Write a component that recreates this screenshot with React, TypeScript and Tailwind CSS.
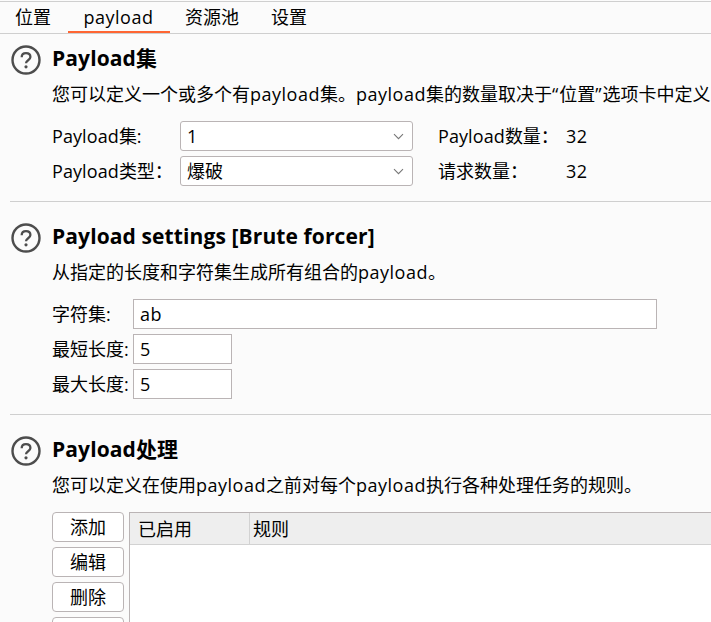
import type { ReactNode } from 'react';

/** Sets Latin runs a little wider than the Chinese text around them. */
function T({ children, tight = false }: { children: string; tight?: boolean }) {
  const runs = children.split(/([A-Za-z0-9 \[\]“”]+)/);
  return (
    <>
      {runs.map((run, i) =>
        i % 2 ? (
          <span key={i} className={/[“”]/.test(run) ? 'tracking-[1px]' : tight ? 'tracking-[0.005em]' : 'tracking-[0.028em]'}>
            {run}
          </span>
        ) : (
          run
        ),
      )}
    </>
  );
}

function Label({ text, className }: { text: string; className: string }) {
  return (
    <span className={`leading-none ${className}`}>
      <T tight>{text}</T>
    </span>
  );
}

function Tab({ label, className, active = false }: { label: string; className: string; active?: boolean }) {
  return (
    <div className={`flex h-[31px] items-center justify-center border-b-2 ${active ? 'border-[#ff6633]' : 'border-transparent'} ${className}`}>
      <span className="leading-none">
        <T>{label}</T>
      </span>
    </div>
  );
}

function HelpIcon() {
  return (
    <svg width="30" height="30" viewBox="0 0 30 30" fill="none" stroke="#4d4d4d" className="shrink-0">
      <circle cx="15" cy="15" r="13.5" strokeWidth="2.4" />
      <path d="M10.7 12.2C10.7 9.6 12.6 8.2 15 8.2s4.4 1.4 4.4 3.8c0 3.2-4.3 3.2-4.4 6.2" strokeWidth="2.3" />
      <circle cx="15" cy="21.8" r="1.6" fill="#4d4d4d" stroke="none" />
    </svg>
  );
}

function Section({ title, text, className, children }: { title: string; text: string; className: string; children: ReactNode }) {
  return (
    <section className={`ml-[10px] pl-px ${className}`}>
      <div className="flex h-[30px] items-center gap-[11px]">
        <HelpIcon />
        <h2 className="pb-[3px] text-[21px] leading-none font-bold">
          <T tight>{title}</T>
        </h2>
      </div>
      <div className="pl-[41px]">
        <p className="h-[46px] pt-[10px] leading-[18px]">
          <T>{text}</T>
        </p>
        {children}
      </div>
    </section>
  );
}

function Select({ value }: { value: string }) {
  return (
    <div className="flex h-[30px] w-[233px] items-center justify-between rounded-[3px] border border-[#bab4b5] bg-white pr-[8px] pl-[6px]">
      <span className="leading-none">
        <T>{value}</T>
      </span>
      <svg width="12" height="8" viewBox="0 0 12 8" fill="none" stroke="#777" strokeWidth="1.1">
        <path d="M2 2.2 6.5 6.7 11 2.2" />
      </svg>
    </div>
  );
}

function Field({ label, value, width }: { label: string; value: string; width: string }) {
  return (
    <div className="flex items-center">
      <Label text={label} className="w-[81px]" />
      <div className={`flex h-[30px] items-center border border-[#bab4b5] bg-white pl-[6px] leading-none ${width}`}>
        <T>{value}</T>
      </div>
    </div>
  );
}

const setRows = [
  { label: 'Payload集:', value: '1', count: 'Payload数量：' },
  { label: 'Payload类型：', value: '爆破', count: '请求数量：' },
];

export default function App() {
  return (
    <div className="h-[622px] w-[711px] overflow-hidden bg-[#fbfbfb] pt-px font-['Open_Sans','Noto_Sans_CJK_SC',sans-serif] text-[18px] whitespace-nowrap text-black">
      <nav className="flex h-[33px] border-y border-[#cfcfcf]">
        <Tab label="位置" className="w-[68px] pr-[2px]" />
        <Tab label="payload" active className="w-[102px] pr-px" />
        <Tab label="资源池" className="w-[84px]" />
        <Tab label="设置" className="w-[70px]" />
      </nav>

      <Section title="Payload集" text="您可以定义一个或多个有payload集。payload集的数量取决于“位置”选项卡中定义" className="border-b border-[#cfcfcf] pt-[11px] pb-[15px]">
        <div className="flex flex-col gap-[5px]">
          {setRows.map((row) => (
            <div key={row.label} className="flex items-center">
              <Label text={row.label} className="w-[128px]" />
              <Select value={row.value} />
              <Label text={row.count} className="ml-[25px] w-[128px]" />
              <span className="leading-none">
                <T>32</T>
              </span>
            </div>
          ))}
        </div>
      </Section>

      <Section title="Payload settings [Brute forcer]" text="从指定的长度和字符集生成所有组合的payload。" className="border-b border-[#cfcfcf] pt-[21px] pb-[15px]">
        <div className="flex flex-col gap-[5px]">
          <Field label="字符集:" value="ab" width="w-[524px]" />
          <Field label="最短长度:" value="5" width="w-[99px]" />
          <Field label="最大长度:" value="5" width="w-[99px]" />
        </div>
      </Section>

      <Section title="Payload处理" text="您可以定义在使用payload之前对每个payload执行各种处理任务的规则。" className="pt-[21px]">
        <div className="flex gap-[5px]">
          <div className="flex w-[72px] shrink-0 flex-col gap-[5px]">
            {['添加', '编辑', '删除', ''].map((label, i) => (
              <button key={i} className="flex h-[30px] items-center justify-center rounded-[4px] border border-[#bab4b5] bg-white leading-none">
                {label}
              </button>
            ))}
          </div>
          <div className="h-[135px] flex-1 border-t border-l border-[#bab4b5] bg-white">
            <div className="flex h-[32px] border-b border-[#d2d2d2] bg-[#eeeeee]">
              <div className="flex w-[120px] items-center border-r border-[#d2d2d2] pl-[8px] leading-none">已启用</div>
              <div className="flex items-center pl-[3px] leading-none">规则</div>
            </div>
          </div>
        </div>
      </Section>
    </div>
  );
}
